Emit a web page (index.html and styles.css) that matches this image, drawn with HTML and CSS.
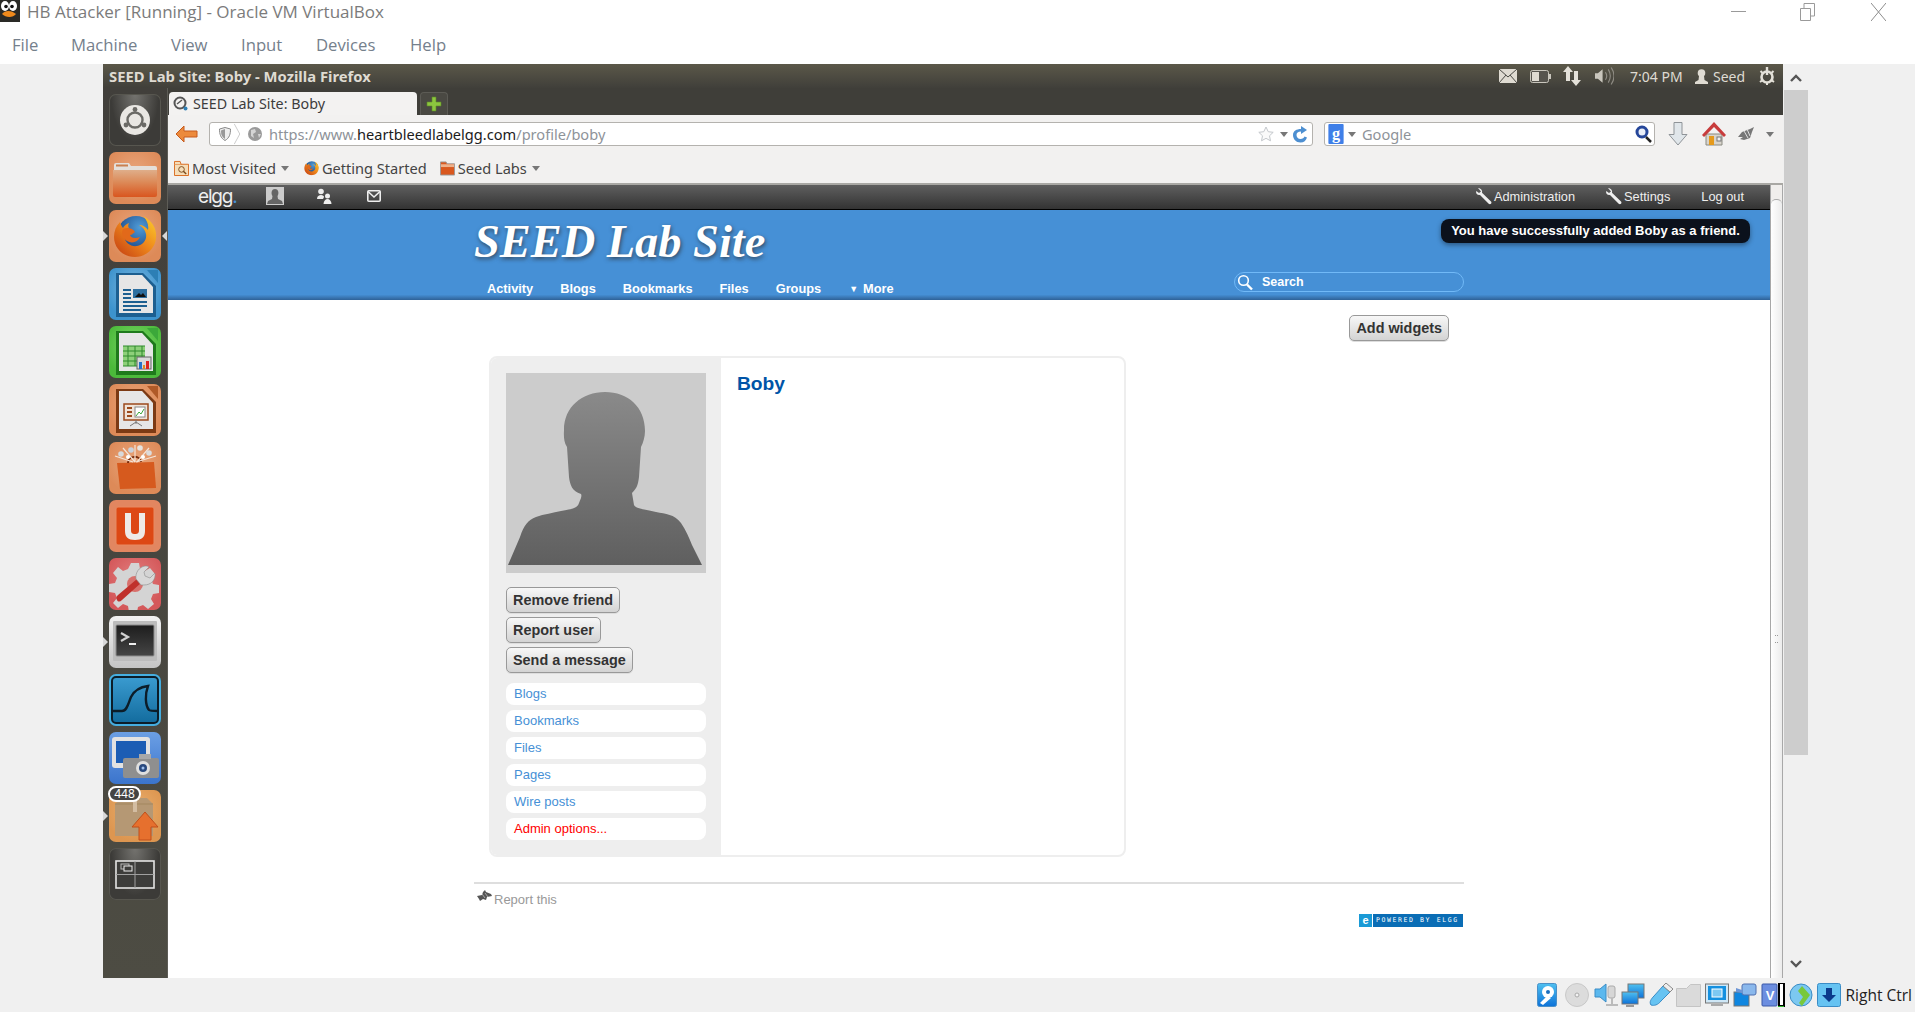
FILE: index.html
```html
<!DOCTYPE html>
<html lang="en">
<head>
<meta charset="utf-8">
<title>HB Attacker [Running] - Oracle VM VirtualBox</title>
<link rel="stylesheet" href="styles.css">
</head>
<body>
<svg class="defs" aria-hidden="true">
  <defs>
    <radialGradient id="ffglobe" cx="60%" cy="30%" r="70%"><stop offset="0" stop-color="#4f9cd8"/><stop offset="1" stop-color="#17407f"/></radialGradient>
    <linearGradient id="fffox" x1="1" y1="0" x2="0" y2="1"><stop offset="0" stop-color="#fbd02e"/><stop offset=".45" stop-color="#ef8a1c"/><stop offset="1" stop-color="#c23a12"/></linearGradient>
    <linearGradient id="sil" x1="0" y1="0" x2="0" y2="1"><stop offset="0" stop-color="#8a8a8a"/><stop offset="1" stop-color="#5f5f5f"/></linearGradient>
    <linearGradient id="skyb" x1="0" y1="0" x2="0" y2="1"><stop offset="0" stop-color="#4fc0f0"/><stop offset="1" stop-color="#0d72d8"/></linearGradient>
    <linearGradient id="folderfill" x1="0" y1="0" x2="0" y2="1"><stop offset="0" stop-color="#dfae8a"/><stop offset=".45" stop-color="#dc8a58"/><stop offset="1" stop-color="#d9561f"/></linearGradient>
    <linearGradient id="sharkfill" x1="0" y1="0" x2="0" y2="1"><stop offset="0" stop-color="#3a9bd0"/><stop offset="1" stop-color="#136c9e"/></linearGradient>
    <linearGradient id="termfill" x1="0" y1="0" x2="0" y2="1"><stop offset="0" stop-color="#1d1d1d"/><stop offset="1" stop-color="#454545"/></linearGradient>
    <symbol id="ff" viewBox="0 0 44 44">
      <circle cx="23" cy="21" r="19" fill="url(#ffglobe)"/>
      <path d="M30 2C40 7 44 16 43 24C42 35 33 43 22 43C10 43 1 34 1 23C1 17 3 12 7 8C8 11 9 13 10 14C11 12 13 10 16 9C15 11 15 13 16 14C12 15 10 18 11 22C12 29 18 33 24 32C30 31 34 26 33 20C32 16 30 13 26 11C30 11 33 13 35 16C36 11 34 6 30 2Z" fill="url(#fffox)"/>
      <path d="M10 15C14 13 20 14 22 18C20 19 19 21 17 21C18 24 22 25 27 23C25 28 19 30 14 27C9 24 8 19 10 15Z" fill="#e2691a"/>
    </symbol>
    <symbol id="wrench" viewBox="0 0 16 17">
      <path d="M2 0c1 0 2 .4 3 1.200 1 1 1.400 2.300 1 3.500l9 8.800c.6.700.6 1.600 0 2.200s-1.600.6-2.300 0L4 7c-1.300.3-2.400 0-3.200-1C0 5 0 3.800.3 2.900L3 5l2-1.600L2 0z" fill="#eeeeee"/>
    </symbol>
  </defs>
</svg>

<header class="host-head">
  <div class="host-title">
    <svg class="tux" viewBox="0 0 20 22"><rect width="20" height="22" fill="#2a2a26"/><ellipse cx="5" cy="6" rx="4" ry="5" fill="#fff"/><ellipse cx="13" cy="6" rx="4" ry="5" fill="#fff"/><circle cx="6" cy="6.500" r="1.800" fill="#111"/><circle cx="12" cy="6.500" r="1.800" fill="#111"/><path d="M2 14c3-4 9-4 14 0-3 4-10 4-14 0z" fill="#f08a1c"/></svg>
    <span>HB Attacker [Running] - Oracle VM VirtualBox</span>
    <div class="win-controls">
      <svg class="wc-min" viewBox="0 0 15 15"><path d="M0 7.500h15" stroke="#9a9a9a"/></svg>
      <svg class="wc-max" viewBox="0 0 15 18"><path d="M.5 5.500h10v12H.5zM4 5V.5h10.500V13H11" fill="none" stroke="#9a9a9a"/></svg>
      <svg class="wc-close" viewBox="0 0 15 18"><path d="M0 0l15 18M15 0L0 18" stroke="#8c8c8c"/></svg>
    </div>
  </div>
  <nav class="host-menu">
    <span class="hm-file">File</span><span class="hm-machine">Machine</span><span class="hm-view">View</span><span class="hm-input">Input</span><span class="hm-devices">Devices</span><span>Help</span>
  </nav>
</header>

<main class="host-main">
  <section class="guest">
    <div class="panel">
      <span class="panel-title">SEED Lab Site: Boby - Mozilla Firefox</span>
      <div class="panel-right">
        <svg class="pi-mail" viewBox="0 0 18 14"><rect width="18" height="14" fill="#dfdbd2"/><path d="M0 0l9 8 9-8M0 14l7-8M18 14l-7-8" fill="none" stroke="#4a4944"/></svg>
        <svg class="pi-batt" viewBox="0 0 21 13"><rect x=".5" y=".5" width="18" height="12" rx="2" fill="#56544e" stroke="#c9c6bd"/><rect x="2" y="2" width="7" height="9" fill="#dfdbd2"/><rect x="19" y="4" width="2" height="5" fill="#c9c6bd"/></svg>
        <svg class="pi-net" viewBox="0 0 18 20"><path d="M5 0l5 6H7v9H3V6H0zM13 20l5-6h-3V5h-4v9H8z" fill="#e4e1d9"/></svg>
        <svg class="pi-snd" viewBox="0 0 20 20"><path d="M0 7h3l5-4v14l-5-4H0z" fill="#c9c6bd"/><path d="M11 6c2 3 2 5 0 8M14 3c3 5 3 9 0 14M17 1c4 6 4 12 0 18" fill="none" stroke="#8f8c84" stroke-width="1.200"/></svg>
        <span class="panel-clock">7:04 PM</span>
        <svg class="pi-user" viewBox="0 0 13 15"><circle cx="6.500" cy="4" r="3.800" fill="#dfdbd2"/><path d="M4 7h5l.5 4 3.500 2v2H0v-2l3.500-2z" fill="#dfdbd2"/></svg>
        <span class="panel-user">Seed</span>
        <svg class="pi-gear" viewBox="0 0 16 18"><circle cx="8" cy="10" r="5.500" fill="none" stroke="#e4e1d9" stroke-width="2.600"/><path d="M8 0v8" stroke="#e4e1d9" stroke-width="2.400"/><path d="M1.500 4l2 2M14.500 4l-2 2M1 15l2-1.500M15 15l-2-1.500M8 16v2" stroke="#e4e1d9" stroke-width="2"/></svg>
      </div>
    </div>

    <div class="desk">
      <aside class="launcher">
        <div class="tile t-dark"><svg viewBox="0 0 52 52"><circle cx="26" cy="26" r="15" fill="#e9e7e3"/><circle cx="26" cy="26" r="7.500" fill="none" stroke="#6b6a66" stroke-width="2.400"/><circle cx="26" cy="15.500" r="2.400" fill="#6b6a66"/><circle cx="17" cy="31" r="2.400" fill="#6b6a66"/><circle cx="35" cy="31" r="2.400" fill="#6b6a66"/></svg></div>
        <div class="tile t-orange"><svg viewBox="0 0 52 52"><path d="M5 13a2 2 0 012-2h13l2 3h24a2 2 0 012 2v4H5z" fill="#e4dfda"/><rect x="7" y="12.500" width="12" height="2" fill="#c9804f"/><path d="M4 18h44v25a2 2 0 01-2 2H6a2 2 0 01-2-2z" fill="url(#folderfill)"/></svg></div>
        <div class="tile t-orange pip-both"><svg viewBox="0 0 52 52"><use href="#ff" x="4" y="4" width="44" height="44"/></svg></div>
        <div class="tile t-blue"><svg viewBox="0 0 52 52"><path d="M7 5h27l13 13v31H7z" fill="#1d5f90"/><path d="M10 7h23l11 12v26H10z" fill="#e6e6e6"/><rect x="24" y="21" width="14" height="9" fill="#2d6fa0"/><path d="M26 29l4-4 2 2 2-2 3 4z" fill="#111"/><path d="M14 21h8v2h-8zM14 25h8v2h-8zM14 29h8v2h-8zM14 33h24v2H14zM14 37h24v2H14zM14 41h18v2H14z" fill="#1d5f90"/><path d="M38 2h11v13z" fill="#2d7fb5"/></svg></div>
        <div class="tile t-green"><svg viewBox="0 0 52 52"><path d="M7 5h27l13 13v31H7z" fill="#1f7a1c"/><path d="M10 7h23l11 12v26H10z" fill="#e6e6e6"/><path d="M14 20h22v20H14z" fill="#8ed07a"/><path d="M14 20h22M14 25h22M14 30h22M14 35h22M14 40h22M19 20v20M26 20v20M33 20v20" stroke="#2f8a2c" fill="none"/><rect x="28" y="31" width="14" height="12" fill="#d9d9d9" stroke="#666"/><path d="M30 36h3v7h-3z" fill="#2672c9"/><path d="M34 39h2v4h-2z" fill="#e8891c"/><path d="M37 35h3v8h-3z" fill="#d22"/><path d="M38 2h11v13z" fill="#3ca83a"/></svg></div>
        <div class="tile t-orange"><svg viewBox="0 0 52 52"><path d="M7 5h27l13 13v31H7z" fill="#7c3a14"/><path d="M10 7h23l11 12v26H10z" fill="#e6e6e6"/><rect x="15" y="20" width="24" height="16" fill="#efe3d8" stroke="#9c4a1c" stroke-width="1.500"/><path d="M18 24h5M18 28h5M18 32h5" stroke="#9c4a1c" stroke-width="2"/><rect x="26" y="23" width="10" height="10" fill="#fff" stroke="#888"/><path d="M27 32l3-4 2 2 3-5" stroke="#3ca83a" fill="none"/><path d="M27 36v4M27 38l-6 4M27 38l6 4" stroke="#777"/><path d="M38 2h11v13z" fill="#b05a28"/></svg></div>
        <div class="tile t-orange"><svg viewBox="0 0 52 52"><path d="M8 21l37-1 2 26-36 1z" fill="#d65a1e"/><path d="M19 21c0-8 12-8 13-1" fill="none" stroke="#7a2d0c" stroke-width="2"/><path d="M6 14l18 6M14 6l12 14M26 3v17M40 6L28 20M47 14l-20 6" stroke="#f4e4d8" stroke-width="1.200"/><circle cx="12" cy="12" r="2.800" fill="#d8dadc"/><circle cx="22" cy="8" r="2.800" fill="#c9d2dc"/><circle cx="31" cy="6" r="2.800" fill="#e6e4e0"/><circle cx="40" cy="11" r="2.800" fill="#dcdcdc"/><circle cx="19" cy="15" r="2" fill="#fff"/><circle cx="34" cy="15" r="2" fill="#fff"/></svg></div>
        <div class="tile t-red-orange"><svg viewBox="0 0 52 52"><rect x="7" y="7" width="38" height="38" rx="2" fill="#dd4814" stroke="#e88a62"/><path d="M16 13h6v17c0 3 1 4 4 4s4-1 4-4V13h6v18c0 6-3 9-10 9s-10-3-10-9z" fill="#eeeae6"/></svg></div>
        <div class="tile t-red"><svg viewBox="0 0 52 52"><path d="M22 5h8l1 6 5 2 5-3 5 6-4 5 2 5 6 1v8l-6 1-2 5 3 5-6 5-5-4-5 2-1 5h-8l-1-6-5-2-5 4-5-5 4-5-2-5-6-1v-8l6-1 2-5-4-5 5-6 5 4 5-2z" fill="#d4d4d4"/><circle cx="26" cy="26" r="8" fill="#d8706c"/><path d="M8 42c-1-2-1-3 1-5l19-16 4 4-19 17c-2 2-4 2-5 0z" fill="#c0312c"/><path d="M27 21c-1-6 3-12 9-13 2 0 3 0 4 1l-5 5 1 4 5 2 5-5c1 7-4 12-11 12l-3 0z" fill="#d8d8d8" stroke="#8c8c8c" stroke-width=".6"/></svg></div>
        <div class="tile t-silver pip-left"><svg viewBox="0 0 52 52"><rect x="4" y="5" width="44" height="40" rx="1" fill="#bcbcbc"/><rect x="7" y="9" width="38" height="31" rx="1" fill="url(#termfill)" stroke="#8d8d8d"/><path d="M12 17l7 4-7 4" fill="none" stroke="#d0d0d0" stroke-width="2.200"/><path d="M20 28h7" stroke="#eee" stroke-width="2"/></svg></div>
        <div class="tile t-shark"><svg viewBox="0 0 52 52"><rect x="3" y="3" width="46" height="46" rx="4" fill="url(#sharkfill)" stroke="#0c1d29" stroke-width="2"/><path d="M3 37h10c5 0 6-7 9-14 3-6 9-10 17-11-3 8-3 19 1 24 1 1 3 1 9 1" fill="none" stroke="#0c1d29" stroke-width="2.400"/></svg></div>
        <div class="tile t-cam"><svg viewBox="0 0 52 52"><rect x="3" y="5" width="38" height="31" rx="3" fill="#e2e2e2"/><rect x="7" y="9" width="30" height="22" fill="#1c5db4"/><rect x="14" y="26" width="36" height="20" rx="2" fill="#8f8f8f"/><rect x="30" y="22" width="12" height="5" fill="#a8a8a8"/><circle cx="34" cy="36" r="7" fill="#dfdfdf"/><circle cx="34" cy="36" r="4" fill="#29497e"/><circle cx="34" cy="36" r="1.500" fill="#9fc0ee"/></svg></div>
        <div class="tile t-amber pip-left"><svg viewBox="0 0 52 52"><path d="M6 14l6-6h26l6 6v32H6z" fill="#b59874"/><path d="M6 14h38" stroke="#a3875f"/><rect x="24" y="8" width="4" height="14" fill="#d3bda2"/><path d="M36 22l13 15h-7v13H30V37h-7z" fill="#e6702e" stroke="#c04f1a"/></svg><span class="count">448</span></div>
        <div class="tile t-dark"><svg viewBox="0 0 52 52"><rect x="7" y="13" width="38" height="27" fill="#3d3d3b" stroke="#e4e4e4" stroke-width="1.600"/><path d="M26 13v27M7 26.500h38" stroke="#a0a0a0"/><rect x="12" y="16" width="8" height="5" fill="none" stroke="#bbb"/><rect x="15" y="18" width="8" height="5" fill="#3d3d3b" stroke="#eee"/></svg></div>
      </aside>

      <div class="browser">
        <div class="tabs">
          <div class="tab">
            <svg class="favicon" viewBox="0 0 15 15"><circle cx="7" cy="7" r="5.500" fill="none" stroke="#555" stroke-width="2"/><path d="M4 8l5-4" stroke="#555" stroke-width="1.500"/><circle cx="12.500" cy="12.500" r="2" fill="#2d7fb5"/></svg>
            <span>SEED Lab Site: Boby</span>
          </div>
          <div class="newtab"><svg viewBox="0 0 16 16"><path d="M6 1h4v5h5v4h-5v5H6v-5H1V6h5z" fill="#8cc63f" stroke="#5d8a23" stroke-width=".6"/></svg></div>
        </div>

        <div class="navbar">
          <svg class="back" viewBox="0 0 23 18"><path d="M9 1L1 9l8 8v-5h13V6H9z" fill="#ec8a3c" stroke="#c65a1c"/></svg>
          <div class="urlbar">
            <svg class="u-shield" viewBox="0 0 12 14"><path d="M6 .5l5.500 1.500c0 5-1 9-5.500 11.500C1.500 11 .5 7 .5 2z" fill="#eee" stroke="#888"/><path d="M6 2v10c-3-2-4-4-4-8.500z" fill="#999"/></svg>
            <svg class="u-chev" viewBox="0 0 7 24"><path d="M0 1l6 11-6 11" fill="none" stroke="#c8c8c8"/></svg>
            <svg class="u-globe" viewBox="0 0 14 14"><circle cx="7" cy="7" r="7" fill="#9a9a9a"/><path d="M3 3l4-1 1 3-3 2 1 4-3-2zM10 7l3 0-2 4z" fill="#d5d5d5"/></svg>
            <span class="u-text">https://www.<b>heartbleedlabelgg.com</b>/profile/boby</span>
            <svg class="u-star" viewBox="0 0 16 16"><path d="M8 1l2.200 4.700 5 .6-3.700 3.500 1 5L8 12.300 3.500 14.800l1-5L.8 6.300l5-.6z" fill="#fafafa" stroke="#c4c8cc"/></svg>
            <i class="caret u-caret"></i>
            <svg class="u-reload" viewBox="0 0 15 17"><path d="M8 3V0l6 4-6 4V5.500c-3 0-4.500 1.500-4.500 3.500s1.500 4 4 4c2 0 3.500-1 4-2.500l2.500 1C13 14.500 11 16.500 7.500 16.500 3 16.500 0 13 0 9s3.500-6 8-6z" fill="#4d8fd1"/></svg>
          </div>
          <div class="searchbar">
            <svg class="s-g" viewBox="0 0 16 21"><rect width="16" height="21" rx="1" fill="#3f7fe8"/><text x="8" y="16" class="s-g-text">g</text></svg>
            <i class="caret s-caret"></i>
            <span class="s-text">Google</span>
            <svg class="s-mag" viewBox="0 0 17 18"><circle cx="7" cy="7" r="5" fill="#e8eef8" stroke="#26479a" stroke-width="3"/><path d="M11 12l5 5" stroke="#222" stroke-width="2.500"/></svg>
          </div>
          <svg class="t-down" viewBox="0 0 20 24"><path d="M6 .5h8v12h5L10 23 1 12.500h5z" fill="#e0e6ea" stroke="#8f9498"/></svg>
          <svg class="t-home" viewBox="0 0 24 24"><path d="M4 12h16v11H4z" fill="#d8d4cc" stroke="#8a8a80"/><rect x="7" y="14" width="5" height="9" fill="#e59a1c"/><rect x="15" y="15" width="4" height="4" fill="#eee" stroke="#777"/><path d="M12 0L0 13l2 2L12 5l10 10 2-2z" fill="#c83c3c"/></svg>
          <svg class="t-bug" viewBox="0 0 18 14"><path d="M4 5l8-3 4-2-2 5-2 6-6 2-4-1 3-2-5 0z" fill="#777"/><path d="M6 4l4 7M9 2l3 7" stroke="#e0e0e0"/></svg>
          <i class="caret t-caret"></i>
        </div>

        <div class="bookmarks">
          <span class="bm bm-most"><svg viewBox="0 0 16 17"><path d="M.5 4.500h15v12H.5z" fill="#f5ddb8" stroke="#d9691c"/><path d="M.5 4.500V1.500h6l1 3" fill="#f5ddb8" stroke="#d9691c"/><circle cx="8" cy="10" r="3" fill="none" stroke="#7a4a1c"/><path d="M10 12l3 3" stroke="#7a4a1c" stroke-width="1.500"/></svg>Most Visited<i class="caret"></i></span>
          <span class="bm bm-start"><svg viewBox="0 0 44 44"><use href="#ff" width="44" height="44"/></svg>Getting Started</span>
          <span class="bm bm-seed"><svg viewBox="0 0 16 16"><path d="M.5 3V1.500h6l1 2h8v12H.5z" fill="#d9581e" stroke="#9b9b9b"/><path d="M1 4h14v3H1z" fill="#eeb28c"/></svg>Seed Labs<i class="caret"></i></span>
        </div>

        <div class="viewport">
          <div class="page">
            <div class="topbar">
              <div class="tb-left">
                <span class="tb-logo">elgg<em>.</em></span>
                <svg class="tb-avatar" viewBox="0 0 18 18"><rect width="18" height="18" fill="#ccc"/><path d="M1 17l1-3 4-2 .5-3C5 7 5 2 9 2s4 5 2.500 7l.5 3 4 2 1 3z" fill="#666"/></svg>
                <svg class="tb-friends" viewBox="0 0 16 16"><circle cx="5" cy="3.500" r="2.800" fill="#eee"/><path d="M1 11c0-3 2-4 4-4s3 1 3 2l-1 2z" fill="#eee"/><circle cx="11.500" cy="8" r="2.500" fill="#eee"/><path d="M7.500 16c0-3 2-5 4-5s4 2 4 5z" fill="#eee"/></svg>
                <svg class="tb-mail" viewBox="0 0 14 12"><rect x=".8" y=".8" width="12.400" height="10.400" rx="1" fill="none" stroke="#eee" stroke-width="1.600"/><path d="M1 1.500l6 5.500 6-5.500" fill="none" stroke="#eee" stroke-width="1.600"/></svg>
              </div>
              <div class="tb-right">
                <a class="tb-admin"><svg viewBox="0 0 16 17"><use href="#wrench" width="16" height="17"/></svg>Administration</a>
                <a class="tb-settings"><svg viewBox="0 0 16 17"><use href="#wrench" width="16" height="17"/></svg>Settings</a>
                <a>Log out</a>
              </div>
            </div>

            <div class="site-head">
              <div class="inner head-inner">
                <h1 class="site-title">SEED Lab Site</h1>
                <div class="head-row">
                  <nav class="site-nav">
                    <a>Activity</a><a>Blogs</a><a>Bookmarks</a><a>Files</a><a>Groups</a><a class="nav-more"><span class="nav-arrow">▼</span>More</a>
                  </nav>
                  <div class="site-search">
                    <svg viewBox="0 0 16 17"><circle cx="6.500" cy="6.500" r="4.800" fill="none" stroke="#fff" stroke-width="1.600"/><path d="M10 10.500l5 5" stroke="#fff" stroke-width="2.400"/></svg>
                    <span>Search</span>
                  </div>
                </div>
              </div>
              <div class="flash">You have successfully added Boby as a friend.</div>
            </div>

            <div class="inner body-inner">
              <div class="widgets-row"><button class="btn">Add widgets</button></div>
              <div class="profile">
                <div class="owner">
                  <svg class="avatar" viewBox="0 0 200 200"><rect width="200" height="200" fill="#cccccc"/><path d="M2 192L14 164C18 152 22 147 30 144C38 141 47 140 55 138C65 136 71 136 73 130C75 125 76 123 75 121C66 118 64 112 63 104L61 74C57 68 58 60 58 57C58 34 76 19 99 19C122 19 139 34 139 58C139 64 137 70 135 74L133 104C132 113 130 116 126 120L128 132C130 136 138 136 150 139C160 141 168 141 175 150C180 157 183 165 186 172L196 192Z" fill="url(#sil)"/></svg>
                  <div class="owner-btns">
                    <button class="btn">Remove friend</button>
                    <button class="btn">Report user</button>
                    <button class="btn">Send a message</button>
                  </div>
                  <ul class="owner-menu">
                    <li>Blogs</li><li>Bookmarks</li><li>Files</li><li>Pages</li><li>Wire posts</li><li class="admin">Admin options...</li>
                  </ul>
                </div>
                <div class="details"><h2>Boby</h2></div>
              </div>
              <footer class="site-foot">
                <a class="report"><svg viewBox="0 0 15 12"><path d="M0 6l5-1 1-3 2-2 1 2 5 2 1 2-5 1-1 3-3-1-3 2-1-2z" fill="#555"/><path d="M5 4l3 4M8 3l3 4" stroke="#ccc" stroke-width=".7"/></svg>Report this</a>
                <div class="powered"><span class="p-e">e</span><span class="p-txt">POWERED BY ELGG</span></div>
              </footer>
            </div>
          </div>
          <div class="inner-scroll"><div class="is-up"></div><div class="is-thumb"><i></i></div></div>
        </div>
      </div>
    </div>
  </section>
  <div class="host-scroll">
    <svg class="hs-arrow" viewBox="0 0 12 8"><path d="M1 7l5-5 5 5" fill="none" stroke="#555" stroke-width="2.400"/></svg>
    <div class="hs-thumb"></div>
    <svg class="hs-arrow" viewBox="0 0 12 8"><path d="M1 1l5 5 5-5" fill="none" stroke="#555" stroke-width="2.400"/></svg>
  </div>
</main>

<footer class="host-status">
  <svg class="st st-hdd" viewBox="0 0 20 24"><rect x=".5" y=".5" width="19" height="23" rx="2" fill="url(#skyb)" stroke="#4a90c8"/><circle cx="11" cy="9" r="6" fill="#fff"/><circle cx="11" cy="9" r="2" fill="#1a6fc0"/><path d="M3 20l7-7 4 2-8 7z" fill="#fff"/></svg>
  <svg class="st st-cd" viewBox="0 0 24 24"><circle cx="12" cy="12" r="11.500" fill="#dcdcdc" stroke="#c8c8c8"/><circle cx="12" cy="12" r="2" fill="#f2f2f2" stroke="#aaa"/></svg>
  <svg class="st st-audio" viewBox="0 0 25 24"><path d="M1 6h5l6-5v18l-6-5H1z" fill="#5bb8ee" stroke="#3a8cc6"/><rect x="14" y="3" width="7" height="12" rx="2" fill="#d6d6d6" stroke="#aaa"/><path d="M12 22h12M18 15v7" stroke="#bbb" stroke-width="2"/></svg>
  <svg class="st st-net" viewBox="0 0 24 24"><rect x="7" y="1" width="16" height="14" fill="url(#skyb)" stroke="#777"/><rect x="1" y="9" width="16" height="12" fill="url(#skyb)" stroke="#777"/><path d="M5 23h8" stroke="#999" stroke-width="2"/></svg>
  <svg class="st st-usb" viewBox="0 0 25 24"><path d="M15 3l7 6-9 9c-3 4-7 5-10 4-2-3 0-6 3-9z" fill="#66c3f2" stroke="#3a8cc6"/><path d="M15 3l3-3 7 6-3 3z" fill="#eee" stroke="#888"/></svg>
  <svg class="st st-folder" viewBox="0 0 25 24"><path d="M.5 5.500V23.500h24V1.500h-10l-4 4z" fill="#dadada" stroke="#c4c4c4"/></svg>
  <svg class="st st-disp" viewBox="0 0 24 24"><rect x=".5" y="1" width="23" height="19" fill="#cfe7f6" stroke="#777"/><rect x="3" y="3" width="18" height="14" fill="#1490e0"/><rect x="7" y="6" width="10" height="8" fill="#7dc8f2" stroke="#fff"/><path d="M6 22h12" stroke="#aaa" stroke-width="2"/></svg>
  <svg class="st st-cam" viewBox="0 0 24 24"><rect x="1" y="9" width="15" height="14" fill="#0f86e0" stroke="#777"/><rect x="9" y="1" width="14" height="11" rx="2" fill="#8ab8ec" stroke="#5070b0"/><path d="M3 5l6 2v3L3 9z" fill="#6d96d6"/></svg>
  <svg class="st st-v" viewBox="0 0 24 24"><rect x="1" y="1" width="15" height="22" rx="1" fill="#6c8ee0" stroke="#3a58a8"/><text x="9" y="17" class="st-v-text">V</text><rect x="18" y="0" width="5" height="23" fill="#fff" stroke="#000" stroke-width="2"/><rect x="17" y="23" width="6" height="1" fill="#2db82d"/></svg>
  <svg class="st st-globe" viewBox="0 0 24 24"><circle cx="12" cy="12" r="11" fill="#7cc8f0" stroke="#3a8cc6"/><path d="M13 3l8 9-8 11-3-3 4-6-5-6z" fill="#78c83c"/></svg>
  <svg class="st st-arrow" viewBox="0 0 24 24"><rect x=".5" y=".5" width="23" height="23" rx="2" fill="#66c3f2" stroke="#3a8cc6"/><path d="M9 5h6v7h4l-7 7-7-7h4z" fill="#0b3a8c"/></svg>
  <span class="right-ctrl">Right Ctrl</span>
</footer>
</body>
</html>
```

FILE: styles.css
```css
* { box-sizing: border-box; }
html, body { margin: 0; padding: 0; }
body {
  width: 1915px; height: 1012px; overflow: hidden;
  display: flex; flex-direction: column;
  background: #f0f0f0;
  font-family: "Liberation Sans", Arial, sans-serif;
}
.defs { position: absolute; width: 0; height: 0; }
svg { display: block; flex: none; }
h1, h2, ul { margin: 0; padding: 0; }

/* host window */
.host-head { height: 64px; background: #fff; font-family: "Open Sans", sans-serif; }
.host-title { height: 24px; display: flex; align-items: center; color: #7b7b7b; font-size: 17px; padding-bottom: 1px; }
.tux { width: 20px; height: 22px; margin-right: 7px; align-self: flex-start; }
.win-controls { margin-left: auto; display: flex; align-items: center; height: 24px; padding-right: 29px; }
.wc-min { width: 15px; height: 15px; }
.wc-max { width: 15px; height: 18px; margin-left: 54px; }
.wc-close { width: 15px; height: 18px; margin-left: 56px; }
.host-menu { height: 40px; display: flex; align-items: center; padding: 1px 0 0 12px; color: #75808c; font-size: 16.700px; }
.hm-file { width: 59px; } .hm-machine { width: 100px; } .hm-view { width: 70px; } .hm-input { width: 75px; } .hm-devices { width: 94px; }

.host-main { height: 914px; display: flex; padding-left: 103px; }
.guest { width: 1680px; display: flex; flex-direction: column; background: #3f3e39; }
.panel {
  height: 24px; display: flex; align-items: center; justify-content: space-between;
  background: linear-gradient(#5b5849, #403f3a); color: #dfdbd2;
  font-family: "Noto Sans", sans-serif; font-size: 14px;
}
.panel-title { margin-left: 6px; font-weight: 700; font-size: 14.800px; }
.panel-right { display: flex; align-items: center; padding-right: 8px; }
.pi-mail { width: 18px; height: 14px; }
.pi-batt { width: 21px; height: 13px; margin-left: 13px; }
.pi-net { width: 18px; height: 20px; margin-left: 12px; }
.pi-snd { width: 19px; height: 20px; margin-left: 14px; }
.panel-clock { margin-left: 16px; width: 54px; white-space: nowrap; }
.pi-user { width: 13px; height: 15px; margin-left: 11px; }
.panel-user { margin-left: 5px; width: 34px; }
.pi-gear { width: 16px; height: 18px; margin-left: 12px; }

.desk { flex: 1; display: flex; min-height: 0; }
.launcher {
  width: 65px; padding: 6px 6px 0; display: flex; flex-direction: column; gap: 6px;
  background: linear-gradient(#413f3b, #4d4c43); border-right: 1px solid #5e5d57;
}
.tile { width: 52px; height: 52px; border-radius: 7px; position: relative; }
.tile svg { width: 52px; height: 52px; }
.t-dark { background: radial-gradient(ellipse at 50% 0, #74736f, #3c3b38 65%); box-shadow: inset 0 0 0 1px #57564f; }
.t-orange { background: radial-gradient(circle at 50% 40%, #e9a67c, #dd8a58 75%); }
.t-blue { background: radial-gradient(circle at 50% 40%, #7db8e0, #3d93cd 75%); }
.t-green { background: radial-gradient(circle at 50% 40%, #7fd96a, #4bb93a 75%); }
.t-red-orange { background: #e28660; }
.t-red { background: radial-gradient(circle at 50% 40%, #e28080, #d4585a 75%); }
.t-silver { background: linear-gradient(#f2f2f2, #c4c4c4); }
.t-shark { background: #45aee0; }
.t-cam { background: linear-gradient(#6b9fe4, #3b74cc); }
.t-amber { background: radial-gradient(circle at 50% 40%, #e9b070, #dd9650 75%); }
.pip-left::before, .pip-both::before {
  content: ""; position: absolute; left: -6px; top: 21px;
  border: 5px solid transparent; border-left: 5px solid #d8d8d8; border-right: 0;
}
.pip-both::after {
  content: ""; position: absolute; right: -6px; top: 21px;
  border: 5px solid transparent; border-right: 5px solid #d8d8d8; border-left: 0;
}
.count {
  position: absolute; left: -1px; top: -4px; width: 33px; height: 16px;
  border-radius: 8px; background: #444; border: 2px solid #fff;
  color: #fff; font: 12px/12px "Noto Sans", sans-serif; text-align: center;
}

/* firefox */
.browser { flex: 1; display: flex; flex-direction: column; min-width: 0; }
.tabs { height: 27px; display: flex; align-items: flex-end; padding-left: 1px; background: #3f3e39; }
.tab {
  width: 248px; height: 23px; display: flex; align-items: center; gap: 5px; padding-left: 4px;
  background: #f3f2f1; border-radius: 4px 4px 0 0; color: #3c3c3c;
  font: 14.300px "Noto Sans", sans-serif;
}
.favicon { width: 15px; height: 15px; }
.newtab {
  width: 28px; height: 23px; margin-left: 3px; display: flex; align-items: center; justify-content: center;
  background: #4a4943; border-radius: 4px 4px 0 0; border: 1px solid #5c5b55; border-bottom: 0;
}
.newtab svg { width: 16px; height: 16px; }
.navbar { height: 35px; display: flex; align-items: center; background: #f2f1f0; padding-top: 3px; }
.back { width: 23px; height: 18px; margin-left: 7px; }
.urlbar, .searchbar {
  height: 24px; display: flex; align-items: center; background: #fff;
  border: 1px solid #b4b2ae; border-radius: 3px; font: 14.600px "Noto Sans", sans-serif; color: #8e9399;
}
.urlbar { width: 1104px; margin-left: 11px; }
.u-shield { width: 12px; height: 14px; margin-left: 9px; }
.u-chev { width: 7px; height: 22px; margin-left: 3px; }
.u-globe { width: 14px; height: 14px; margin-left: 7px; }
.u-text { margin-left: 7px; }
.u-text b { font-weight: 400; color: #1c1c1c; }
.u-star { width: 16px; height: 16px; margin-left: auto; }
.u-caret { margin-left: 6px; }
.u-reload { width: 15px; height: 17px; margin: 0 4px 0 5px; }
.caret { display: block; width: 0; height: 0; border: 4px solid transparent; border-top: 5px solid #777; border-bottom: 0; flex: none; }
.searchbar { width: 331px; margin-left: 11px; }
.s-g { width: 16px; height: 20px; margin-left: 3px; }
.s-g-text { font: 700 17px "Liberation Serif", serif; fill: #fff; text-anchor: middle; }
.s-caret { margin-left: 4px; }
.s-text { margin-left: 6px; }
.s-mag { width: 17px; height: 18px; margin-left: auto; margin-right: 2px; }
.t-down { width: 20px; height: 24px; margin-left: 13px; }
.t-home { width: 24px; height: 24px; margin-left: 14px; }
.t-bug { width: 18px; height: 14px; margin-left: 12px; }
.t-caret { margin-left: 10px; }
.bookmarks {
  height: 35px; display: flex; align-items: center; padding: 3px 0 0 6px; background: #f2f1f0;
  border-bottom: 2px solid #a9a8a4; color: #444;
  font: 14.600px "Noto Sans", sans-serif;
}
.bm { display: flex; align-items: center; gap: 3px; }
.bm svg { width: 15px; height: 16px; }
.bm .caret { margin-left: 2px; }
.bm-start { margin-left: 15px; }
.bm-seed { margin-left: 13px; }

.viewport { flex: 1; display: flex; min-height: 0; }
.page { flex: 1; background: #fff; position: relative; min-width: 0; }
.inner-scroll { width: 13px; display: flex; flex-direction: column; background: #f0eeec; border-left: 1px solid #a8a8a8; border-right: 1px solid #a8a8a8; }
.is-up { height: 14px; }
.is-thumb { flex: 1; background: linear-gradient(90deg, #fff, #ececec); border-radius: 5px 5px 0 0; border-top: 1px solid #aaa; position: relative; }
.is-thumb i { position: absolute; left: 4px; top: 435px; width: 3px; height: 8px; border-top: 1px dotted #999; border-bottom: 1px dotted #999; }

.topbar {
  height: 25px; display: flex; justify-content: space-between; align-items: center; padding-bottom: 2px;
  background: linear-gradient(#5f5f5f, #333); border-bottom: 1px solid #000; color: #eee; font-size: 12.800px;
}
.tb-left { display: flex; align-items: center; padding-left: 30px; }
.tb-logo { width: 36px; font: 400 19px "Inter", sans-serif; letter-spacing: -1.200px; color: #eee; }
.tb-logo em { color: #4690d6; font-style: normal; }
.tb-avatar { width: 18px; height: 18px; margin-left: 32px; }
.tb-friends { width: 16px; height: 16px; margin-left: 32px; }
.tb-mail { width: 14px; height: 12px; margin-left: 35px; }
.tb-right { display: flex; align-items: center; padding-right: 26px; gap: 31px; }
.tb-right a { display: flex; align-items: center; gap: 2px; }
.tb-right svg { width: 16px; height: 17px; }

.site-head {
  height: 90px; position: relative;
  background: linear-gradient(#4690d6 0, #4690d6 94%, #2f6297 100%);
}
.inner { width: 990px; margin: 0 auto; }
.head-inner { height: 90px; display: flex; flex-direction: column; justify-content: space-between; }
.site-title {
  padding-top: 6px; color: #fff; font: italic 700 46.400px/52px "Liberation Serif", serif;
  text-shadow: 1px 2px 4px #33475c;
}
.head-row { display: flex; justify-content: space-between; align-items: flex-end; position: relative; height: 28px; }
.site-nav { display: flex; gap: 27px; padding: 0 0 3px 13px; color: #fff; font-weight: 700; font-size: 12.800px; line-height: 16px; }
.nav-more { display: flex; align-items: center; margin-left: 1px; }
.nav-arrow { font-size: 9px; margin-right: 5px; }
.site-search {
  width: 230px; height: 20px; margin-bottom: 8px; display: flex; align-items: center; gap: 9px; padding-left: 2px;
  border: 1px solid #71b9f7; border-radius: 10px; color: #fff; font-weight: 700; font-size: 12.500px;
}
.site-search svg { width: 16px; height: 17px; }
.flash {
  position: absolute; right: 20px; top: 9px; width: 309px; height: 24px;
  background: #0b111c; color: #fff; border-radius: 8px; font-weight: 700; font-size: 13px; line-height: 24px; text-align: center;
  box-shadow: 0 2px 5px rgba(0,0,0,.4);
}

.btn {
  display: block; height: 26px; padding: 0 6px; border: 1px solid #999; border-radius: 5px;
  background: linear-gradient(#f7f7f7, #d3d3d3); color: #333;
  font: 700 14.400px "Liberation Sans", sans-serif; box-shadow: 0 1px 0 #ddd;
}
.widgets-row { display: flex; justify-content: flex-end; padding: 15px 15px 0 0; }
.profile { margin: 15px 0 0 15px; width: 637px; height: 501px; display: flex; border: 2px solid #eee; border-radius: 8px; }
.owner { width: 230px; padding: 15px; background: #eee; border-radius: 6px 0 0 6px; }
.avatar { width: 200px; height: 200px; }
.owner-btns { display: flex; flex-direction: column; align-items: flex-start; gap: 4px; margin-top: 14px; }
.owner-menu { list-style: none; margin-top: 10px; display: flex; flex-direction: column; gap: 5px; }
.owner-menu li { height: 22px; padding-left: 8px; background: #fff; border-radius: 8px; color: #4690d6; font-size: 13px; line-height: 22px; }
.owner-menu .admin { color: #f00; }
.details { padding: 14px 16px; }
.details h2 { color: #0054a7; font-size: 19.200px; line-height: 24px; }
.site-foot { margin-top: 25px; border-top: 2px solid #dedede; display: flex; flex-direction: column; }
.report { display: flex; align-items: flex-end; margin: 6px 0 0 3px; color: #999; font-size: 13px; line-height: 16px; }
.report svg { width: 15px; height: 12px; margin: 0 2px 6px 0; }
.powered { align-self: flex-end; margin: 6px 1px 0 0; width: 104px; height: 13px; display: flex; gap: 1px; }
.p-e { width: 13px; background: #1a9ad6; color: #fff; font: 700 11px/12px "Liberation Sans", sans-serif; text-align: center; }
.p-txt { flex: 1; background: #0a6db5; color: #fff; font: 400 6.500px/13px "DejaVu Sans Mono", monospace; letter-spacing: 1.600px; padding-left: 3px; white-space: nowrap; overflow: hidden; }

.host-scroll { width: 24px; margin-left: 1px; display: flex; flex-direction: column; align-items: center; }
.hs-arrow { width: 12px; height: 8px; margin: 10px 0 8px; }
.hs-thumb { width: 24px; height: 665px; background: #cdcdcd; margin-bottom: 205px; }
.hs-thumb + .hs-arrow { margin: 0; }

.host-status { height: 34px; display: flex; justify-content: flex-end; align-items: center; padding-right: 3px; gap: 4px; }
.st { height: 24px; width: 24px; }
.st-hdd { width: 20px; }
.st-cd { margin-left: 4px; }
.st-audio { width: 25px; margin-left: 1px; }
.st-net { margin-left: -2px; }
.st-usb, .st-folder { width: 25px; margin-left: -1px; }
.st-v { margin-left: 0; }
.st-v-text { font: 700 13px "Liberation Sans", sans-serif; fill: #fff; text-anchor: middle; }
.right-ctrl { margin-left: 1px; font: 15.500px "Open Sans", sans-serif; color: #222; }
```
